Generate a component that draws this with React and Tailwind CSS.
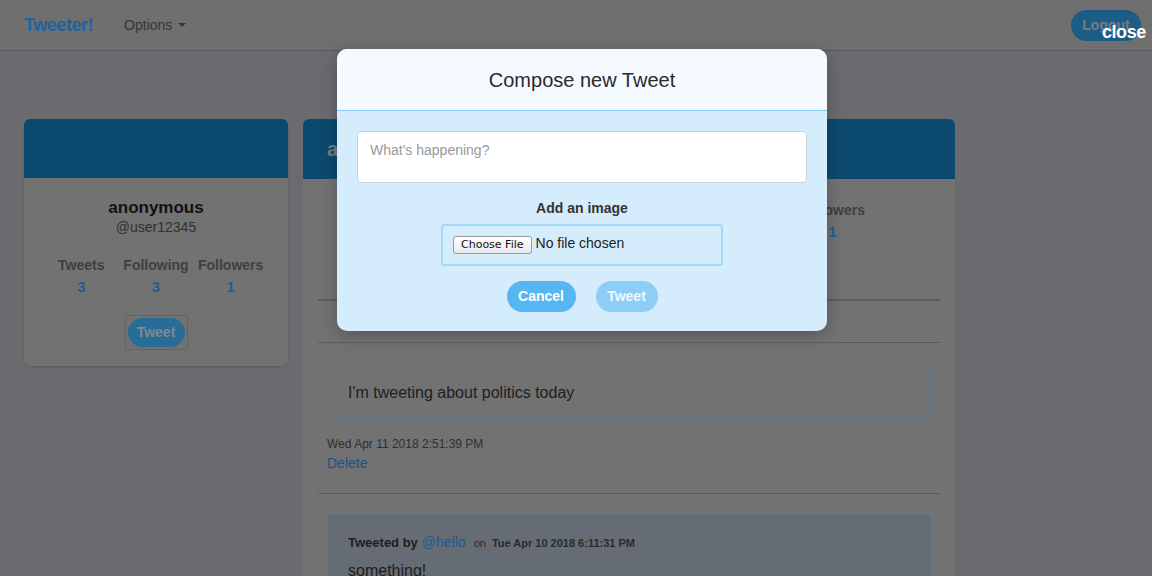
import React from "react";

const font = { fontFamily: '"Liberation Sans", Arial, sans-serif' };

function Stat({ label, value }) {
  return (
    <div className="flex flex-col items-center">
      <span className="text-[14px] font-bold text-[#3f3f3f] leading-[18px]">{label}</span>
      <span className="text-[15px] font-bold text-[#1c5f98] leading-[20px] mt-[3px]">{value}</span>
    </div>
  );
}

export default function App() {
  return (
    <div className="relative w-[1152px] h-[576px] overflow-hidden bg-[#6a6b6e]" style={font}>
      {/* Navbar */}
      <nav className="h-[51px] bg-[#6f6f6f] border-b border-[#5a5a5a] flex items-center pl-6 pr-[11px]">
        <span className="text-[18px] font-bold text-[#1d64a0] tracking-tight">Tweeter!</span>
        <span className="ml-[31px] text-[14px] text-[#363636] flex items-center gap-[6px]">
          Options
          <span className="w-0 h-0 border-l-[4px] border-r-[4px] border-t-[4px] border-l-transparent border-r-transparent border-t-[#363636]" />
        </span>
        <div className="ml-auto h-[31px] w-[70px] rounded-full bg-[#1d5c85] flex items-center justify-center text-[14px] font-bold text-[#757d84]">
          Logout
        </div>
      </nav>

      {/* Main */}
      <div className="flex gap-[15px] px-6 pt-[68px]">
        {/* Profile card */}
        <div className="w-[264px] h-[247px] rounded-[6px] bg-[#727272] overflow-hidden shadow-[0_1px_2px_rgba(0,0,0,0.15)]">
          <div className="h-[59px] bg-[#0b4a6e]" />
          <div className="flex flex-col items-center pt-[20px]">
            <span className="text-[17px] font-bold text-[#111] leading-[20px]">anonymous</span>
            <span className="text-[14px] text-[#303030] leading-[18px]">@user12345</span>
            <div className="grid grid-cols-3 w-[224px] mt-[20px]">
              <Stat label="Tweets" value="3" />
              <Stat label="Following" value="3" />
              <Stat label="Followers" value="1" />
            </div>
            <div className="mt-[18px] p-[2px] border border-[#3f6e90] rounded-[2px]">
              <div className="h-[29px] w-[57px] rounded-full bg-[#2a6c98] flex items-center justify-center text-[14px] font-bold text-[#7c8a94]">
                Tweet
              </div>
            </div>
          </div>
        </div>

        {/* Feed card */}
        <div className="w-[652px] h-[480px] rounded-t-[6px] bg-[#727272] overflow-hidden">
          <div className="h-[60px] bg-[#0b4a6e] flex items-center px-6">
            <span className="text-[20px] font-bold text-[#757d84]">anonymous</span>
          </div>
          <div className="flex justify-end gap-[16px] pr-[90px] pt-[22px]">
            <Stat label="Tweets" value="3" />
            <Stat label="Following" value="3" />
            <Stat label="Followers" value="1" />
          </div>
          <div className="mx-[15px] mt-[57px] border-t-2 border-[#5c5c5c]" />
          <div className="mx-[15px] mt-[41px] border-t border-[#5c5c5c]" />
          <div className="px-6 pt-[20px]">
            <div className="h-[58px] rounded-[4px] border border-[#5b7488] flex items-center px-5 pt-[2px] text-[16px] text-[#1e1e1e]">
              I'm tweeting about politics today
            </div>
            <div className="mt-[16px] text-[12px] text-[#2f2f2f] leading-[15px]">Wed Apr 11 2018 2:51:39 PM</div>
            <div className="text-[14px] text-[#1b5488] leading-[20px] mt-[1px]">Delete</div>
          </div>
          <div className="mx-[15px] mt-[20px] border-t border-[#5c5c5c]" />
          <div className="px-6 pt-[20px]">
            <div className="h-[80px] rounded-[4px] border border-[#5b7488] bg-[#666c74] px-5 pt-[17px]">
              <div className="flex items-baseline gap-[6px] text-[13px]">
                <span className="font-bold text-[#1e1e1e]">Tweeted by</span>
                <span className="text-[14px] text-[#1d5a94] -ml-[2px]">@hello</span>
                <span className="text-[11px] text-[#2a2a2a] ml-[2px]">on</span>
                <span className="text-[11px] font-bold text-[#2a2a2a]">Tue Apr 10 2018 6:11:31 PM</span>
              </div>
              <div className="mt-[6px] text-[16px] text-[#1e1e1e]">something!</div>
            </div>
          </div>
        </div>
      </div>

      {/* Modal close */}
      <span className="absolute left-[1102px] top-[22px] text-[18px] font-bold text-white leading-[20px] tracking-tight">
        close
      </span>

      {/* Modal */}
      <div className="absolute left-[337px] top-[49px] w-[490px] h-[282px] rounded-[10px] overflow-hidden bg-[#d4ecfc] shadow-[0_4px_16px_rgba(0,0,0,0.25)]">
        <div className="h-[62px] bg-[#f4faff] border-b border-[#86cbf5] flex items-center justify-center">
          <span className="text-[20px] text-[#2a2a2a]">Compose new Tweet</span>
        </div>
        <div className="px-5 pt-[20px] flex flex-col items-center">
          <div className="w-[450px] h-[52px] rounded-[4px] bg-white border border-[#c9d3da] px-3 pt-[8px] text-[14px] text-[#999]">
            What's happening?
          </div>
          <div className="mt-[16px] text-[14px] font-bold text-[#333] leading-[18px]">Add an image</div>
          <div className="mt-[7px] w-[282px] h-[42px] rounded-[3px] border-2 border-[#a6d7f6] flex items-center pl-[10px] gap-[4px]">
            <span className="h-[18px] px-[7px] rounded-[3px] border border-[#999] bg-gradient-to-b from-white to-[#e8e8e8] text-[11px] text-[#111] flex items-center" style={{ fontFamily: '"DejaVu Sans", sans-serif', fontSize: 11 }}>
              Choose File
            </span>
            <span className="text-[14px] text-[#222] -mt-[4px]">No file chosen</span>
          </div>
          <div className="mt-[15px] flex gap-[20px]">
            <div className="h-[31px] w-[69px] rounded-full bg-[#55b6f2] flex items-center justify-center text-[14px] font-bold text-white">
              Cancel
            </div>
            <div className="h-[31px] w-[62px] rounded-full bg-[#8dcdf6] flex items-center justify-center text-[14px] font-bold text-[#eef8ff]">
              Tweet
            </div>
          </div>
        </div>
      </div>
    </div>
  );
}
